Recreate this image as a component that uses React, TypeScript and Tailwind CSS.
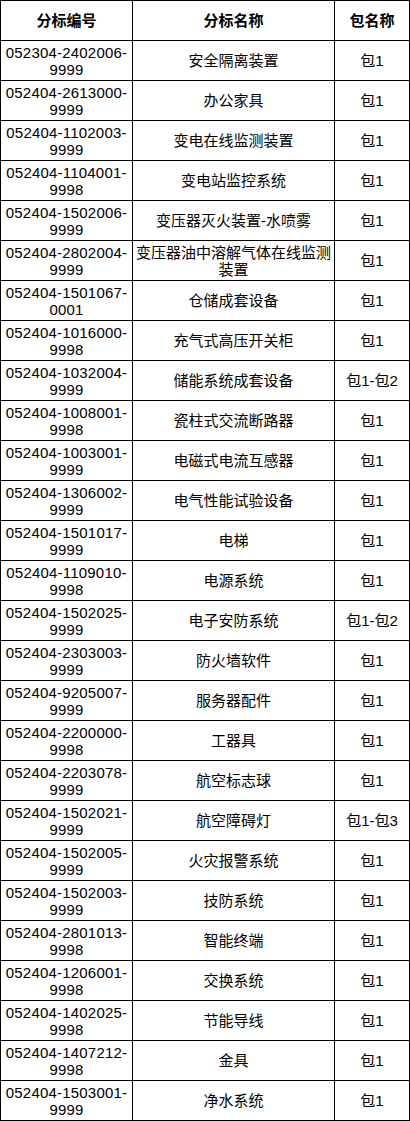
import React from "react";

const rows: [string, string, string, string][] = [
  ["052304-2402006-", "9999", "安全隔离装置", "包1"],
  ["052404-2613000-", "9999", "办公家具", "包1"],
  ["052404-1102003-", "9999", "变电在线监测装置", "包1"],
  ["052404-1104001-", "9998", "变电站监控系统", "包1"],
  ["052404-1502006-", "9999", "变压器灭火装置-水喷雾", "包1"],
  ["052404-2802004-", "9999", "变压器油中溶解气体在线监测|装置", "包1"],
  ["052404-1501067-", "0001", "仓储成套设备", "包1"],
  ["052404-1016000-", "9998", "充气式高压开关柜", "包1"],
  ["052404-1032004-", "9999", "储能系统成套设备", "包1-包2"],
  ["052404-1008001-", "9998", "瓷柱式交流断路器", "包1"],
  ["052404-1003001-", "9999", "电磁式电流互感器", "包1"],
  ["052404-1306002-", "9999", "电气性能试验设备", "包1"],
  ["052404-1501017-", "9999", "电梯", "包1"],
  ["052404-1109010-", "9998", "电源系统", "包1"],
  ["052404-1502025-", "9999", "电子安防系统", "包1-包2"],
  ["052404-2303003-", "9999", "防火墙软件", "包1"],
  ["052404-9205007-", "9999", "服务器配件", "包1"],
  ["052404-2200000-", "9998", "工器具", "包1"],
  ["052404-2203078-", "9999", "航空标志球", "包1"],
  ["052404-1502021-", "9999", "航空障碍灯", "包1-包3"],
  ["052404-1502005-", "9999", "火灾报警系统", "包1"],
  ["052404-1502003-", "9999", "技防系统", "包1"],
  ["052404-2801013-", "9998", "智能终端", "包1"],
  ["052404-1206001-", "9998", "交换系统", "包1"],
  ["052404-1402025-", "9998", "节能导线", "包1"],
  ["052404-1407212-", "9998", "金具", "包1"],
  ["052404-1503001-", "9999", "净水系统", "包1"],
];

const cell =
  "h-[40px] min-w-0 border-r border-b border-black flex flex-col items-center justify-center text-center leading-[17px] whitespace-nowrap";

export default function App() {
  return (
    <div
      className="w-[410px] bg-white text-black text-[15px]"
      style={{ fontFamily: '"Liberation Sans", "Noto Sans CJK SC", sans-serif' }}
    >
      <div className="grid grid-cols-[132px_202px_75px] border-l border-t border-black">
        <div className={`${cell} font-bold`}>分标编号</div>
        <div className={`${cell} font-bold`}>分标名称</div>
        <div className={`${cell} font-bold`}>包名称</div>
        {rows.map(([c1, c2, name, pkg], i) => (
          <React.Fragment key={i}>
            <div className={`${cell} tracking-[0.2px]`}>
              <span>{c1}</span>
              <span>{c2}</span>
            </div>
            <div className={cell}>
              {name.split("|").map((p, j) => (
                <span key={j}>{p}</span>
              ))}
            </div>
            <div className={cell}>{pkg}</div>
          </React.Fragment>
        ))}
      </div>
    </div>
  );
}
